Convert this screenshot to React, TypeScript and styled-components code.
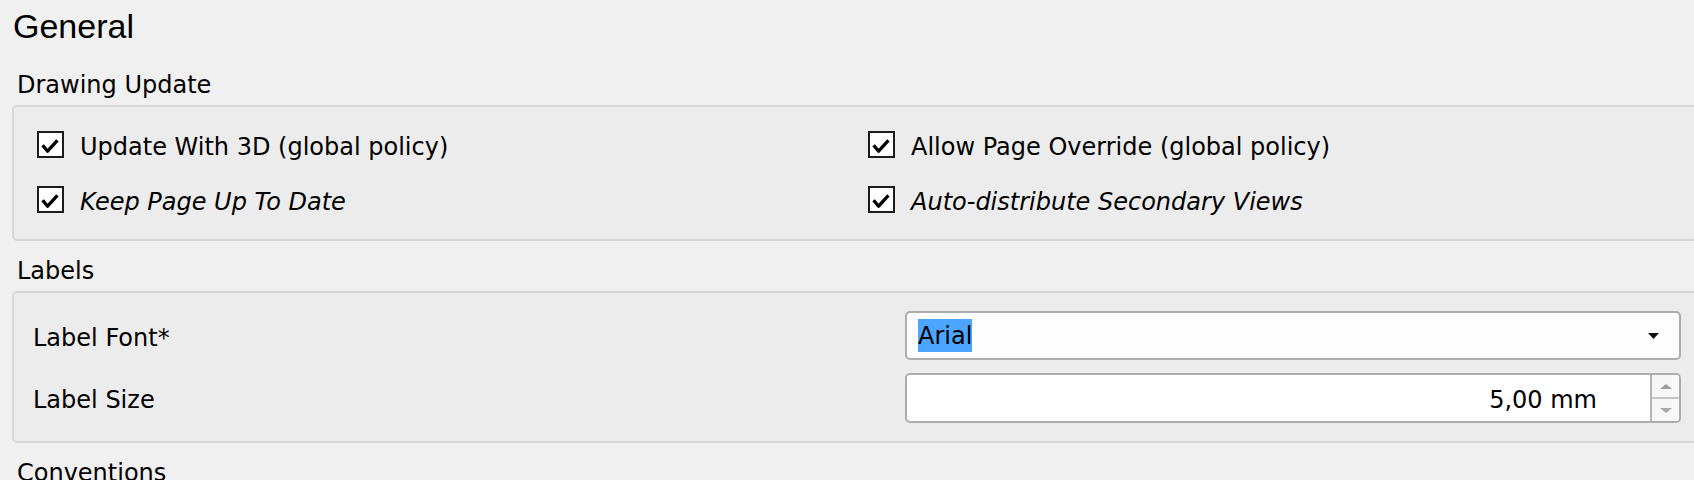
import React from 'react';
import styled, { createGlobalStyle } from 'styled-components';

const Global = createGlobalStyle`
  html, body { margin: 0; padding: 0; background: #f0f0f0; overflow: hidden; }
  body { font-family: "DejaVu Sans", "Noto Sans", sans-serif; color: #000; }
  * { box-sizing: border-box; }
`;

const Page = styled.div`
  width: 1694px;
  height: 480px;
  overflow: hidden;
  padding-left: 12px;
`;

const Title = styled.h1`
  margin: 0;
  padding: 6px 0 0 1px;
  font-family: "Liberation Sans", Arial, sans-serif;
  font-size: 34px;
  font-weight: 400;
  line-height: 41px;
`;

const SectionHeader = styled.div<{ $first?: boolean }>`
  margin: ${(p) => (p.$first ? 24 : 16)}px 0 0 5px;
  font-size: 24px;
  line-height: 28px;
  white-space: nowrap;
`;

const GroupBox = styled.div`
  margin-top: 6px;
  width: 1740px;
  background: #ececec;
  border: 2px solid #d7d7d7;
  border-radius: 5px;
`;

const CheckGrid = styled.div`
  display: grid;
  grid-template-columns: 831px 831px;
  grid-auto-rows: 55px;
  padding: 10px 23px 12px;
`;

const CheckRow = styled.label`
  display: flex;
  align-items: center;
  gap: 16px;
`;

const CheckBox = styled.span`
  width: 27px;
  height: 27px;
  flex: none;
  border: 2px solid #1c1c1c;
  background: #fff;
  display: flex;
  align-items: center;
  justify-content: center;
`;

const LabelText = styled.span<{ $italic?: boolean }>`
  font-size: 24px;
  line-height: 28px;
  padding-top: 4px;
  font-style: ${(p) => (p.$italic ? 'oblique' : 'normal')};
  white-space: nowrap;
`;

const FormGrid = styled.div`
  display: grid;
  grid-template-columns: 872px 776px;
  row-gap: 13px;
  padding: 18px 0 18px 19px;
  align-items: center;
`;

const Combo = styled.div`
  height: 49px;
  border: 2px solid #adadad;
  border-radius: 5px;
  background: #fdfdfd;
  display: flex;
  align-items: center;
  justify-content: space-between;
  padding: 0 20px 0 11px;
`;

const Selected = styled.span`
  background: #4ca5ff;
  font-size: 24px;
  line-height: 32px;
  padding-top: 1px;
`;

const Spin = styled.div`
  height: 50px;
  border: 2px solid #adadad;
  border-radius: 5px;
  background: #fff;
  display: flex;
  overflow: hidden;
`;

const SpinValue = styled.div`
  flex: 1;
  display: flex;
  align-items: center;
  justify-content: flex-end;
  padding: 3px 53px 0 0;
  font-size: 24px;
  line-height: 28px;
`;

const SpinButtons = styled.div`
  width: 29px;
  flex: none;
  border-left: 2px solid #b4b4b4;
  display: flex;
  flex-direction: column;
  background: #f7f7f7;
`;

const SpinButton = styled.div<{ $top?: boolean }>`
  flex: 1;
  display: flex;
  align-items: center;
  justify-content: center;
  border-top: ${(p) => (p.$top ? 'none' : '2px solid #c4c4c4')};
`;

const Check = () => (
  <svg width="23" height="23" viewBox="0 0 23 23">
    <path
      d="M3.6 12.2 L8.6 18.2 L18.4 7.4"
      fill="none"
      stroke="#000"
      strokeWidth="3.3"
      strokeLinejoin="round"
    />
  </svg>
);

const CheckItem = ({ label, italic }: { label: string; italic?: boolean }) => (
  <CheckRow>
    <CheckBox>
      <Check />
    </CheckBox>
    <LabelText $italic={italic}>{label}</LabelText>
  </CheckRow>
);

export default function App() {
  return (
    <>
      <Global />
      <Page>
        <Title>General</Title>

        <SectionHeader $first>Drawing Update</SectionHeader>
        <GroupBox>
          <CheckGrid>
            <CheckItem label="Update With 3D (global policy)" />
            <CheckItem label="Allow Page Override (global policy)" />
            <CheckItem label="Keep Page Up To Date" italic />
            <CheckItem label="Auto-distribute Secondary Views" italic />
          </CheckGrid>
        </GroupBox>

        <SectionHeader>Labels</SectionHeader>
        <GroupBox>
          <FormGrid>
            <LabelText>Label Font*</LabelText>
            <Combo>
              <Selected>Arial</Selected>
              <svg width="11" height="6" viewBox="0 0 11 6">
                <path d="M0 0 H11 L5.5 6 Z" fill="#111" />
              </svg>
            </Combo>
            <LabelText>Label Size</LabelText>
            <Spin>
              <SpinValue>5,00 mm</SpinValue>
              <SpinButtons>
                <SpinButton $top>
                  <svg width="12" height="5" viewBox="0 0 12 5">
                    <path d="M0 5 H12 L6 0 Z" fill="#9c9c9c" />
                  </svg>
                </SpinButton>
                <SpinButton>
                  <svg width="12" height="5" viewBox="0 0 12 5">
                    <path d="M0 0 H12 L6 5 Z" fill="#a8a8a8" />
                  </svg>
                </SpinButton>
              </SpinButtons>
            </Spin>
          </FormGrid>
        </GroupBox>

        <SectionHeader>Conventions</SectionHeader>
      </Page>
    </>
  );
}
